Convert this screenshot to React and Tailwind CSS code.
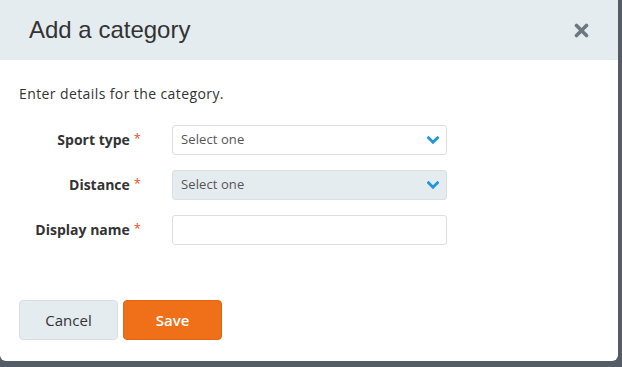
import React from "react";

function Chevron() {
  return (
    <svg width="12" height="9" viewBox="0 0 12 9" className="shrink-0">
      <path d="M1.5 1.8 L6 6.3 L10.5 1.8" fill="none" stroke="#1f97dc" strokeWidth="2.8" strokeLinecap="square" />
    </svg>
  );
}

function Label({ children }) {
  return (
    <div className="w-[143px] shrink-0 text-right text-[14px] font-bold text-[#333] pr-[2px]">
      {children}
      <span className="text-[#e94f2a] font-normal ml-[4px] text-[13px] relative top-[-2px]">*</span>
    </div>
  );
}

export default function App() {
  return (
    <div className="w-[622px] h-[367px] bg-[#565c65] overflow-hidden" style={{ fontFamily: '"Open Sans", sans-serif' }}>
      <div className="w-[618px] h-[365px] -mt-[4px] bg-white rounded-[6px] overflow-hidden flex flex-col">
        <div className="h-[64px] shrink-0 bg-[#e5ecf0] flex items-center justify-between pt-[4px] pl-[29px] pr-[29px]">
          <h1 className="text-[24px] text-[#333] leading-none" style={{ fontFamily: '"Liberation Sans", Arial, sans-serif' }}>
            Add a category
          </h1>
          <svg width="15" height="15" viewBox="0 0 15 15">
            <path d="M2.5 2.5 L12.5 12.5 M12.5 2.5 L2.5 12.5" stroke="#6b7882" strokeWidth="3.6" strokeLinecap="round" />
          </svg>
        </div>
        <div className="flex flex-col pl-[19px] pt-[24px]">
          <p className="text-[14px] text-[#333] leading-[20px] tracking-[0.4px]">Enter details for the category.</p>
          <div className="flex flex-col gap-[15px] mt-[21px] -ml-[19px]">
            <div className="flex items-center gap-[29px] h-[30px]">
              <Label>Sport type</Label>
              <div className="w-[275px] h-[30px] border border-[#dcdfe1] rounded-[3px] bg-white flex items-center justify-between pl-[8px] pr-[7px]">
                <span className="text-[13px] text-[#555] tracking-[0.1px]">Select one</span>
                <Chevron />
              </div>
            </div>
            <div className="flex items-center gap-[29px] h-[30px]">
              <Label>Distance</Label>
              <div className="w-[275px] h-[30px] border border-[#dcdfe1] rounded-[3px] bg-[#e5ecf0] flex items-center justify-between pl-[8px] pr-[7px]">
                <span className="text-[13px] text-[#555] tracking-[0.1px]">Select one</span>
                <Chevron />
              </div>
            </div>
            <div className="flex items-center gap-[29px] h-[30px]">
              <Label>Display name</Label>
              <div className="w-[275px] h-[30px] border border-[#dcdfe1] rounded-[3px] bg-white"></div>
            </div>
          </div>
          <div className="flex gap-[5px] mt-[55px]">
            <button className="w-[99px] h-[40px] rounded-[4px] bg-[#e5ecf0] border border-[#d6dfe4] text-[15px] text-[#333]">
              Cancel
            </button>
            <button className="w-[99px] h-[40px] rounded-[4px] bg-[#f07019] border border-[#e4650f] text-[15px] font-semibold text-white">
              Save
            </button>
          </div>
        </div>
      </div>
    </div>
  );
}
